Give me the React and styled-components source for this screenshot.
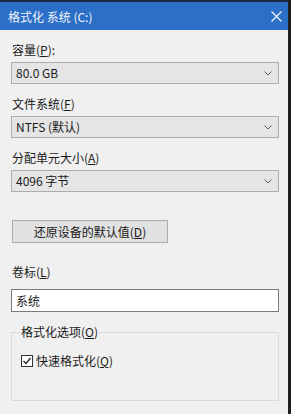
import React, { useState } from "react";
import styled, { createGlobalStyle } from "styled-components";

const GlobalStyle = createGlobalStyle`
  html, body {
    margin: 0;
    padding: 0;
    background: #1e1f22;
  }
  body {
    font-family: "Noto Sans CJK SC", "Noto Sans", sans-serif;
    font-size: 12px;
    color: #1a1a1a;
  }
`;

const Screen = styled.div`
  display: flex;
  width: 291px;
  height: 414px;
  overflow: hidden;
`;
const Window = styled.div`
  display: flex;
  flex-direction: column;
  width: 288px;
  background: #f0f0f0;
  border-top: 2px solid #1b2b45;
`;
const Edge = styled.div`
  flex: 1;
  background: #1e1f22;
`;
const TitleBar = styled.div`
  display: flex;
  align-items: center;
  justify-content: space-between;
  height: 28px;
  padding: 0 2px 0 8px;
  background: #2b6fc6;
  color: #f2f6fc;
  font-size: 12px;
`;
const CloseButton = styled.button`
  display: flex;
  align-items: center;
  justify-content: center;
  width: 20px;
  height: 20px;
  padding: 0;
  border: none;
  background: transparent;
  cursor: pointer;
`;
const Body = styled.div`
  display: flex;
  flex-direction: column;
  padding: 12px 9px 0 11px;
`;
const Label = styled.div`
  line-height: 16px;
  margin-top: ${({ $top }) => $top || 0}px;
  margin-bottom: ${({ $gap }) => $gap || 4}px;
  padding-left: 1px;
`;
const SelectBox = styled.div`
  display: flex;
  align-items: center;
  justify-content: space-between;
  box-sizing: border-box;
  height: 22px;
  padding: 0 6px 0 4px;
  border: 1px solid #adadad;
  background: #e5e5e5;
  line-height: 16px;
`;
const Button = styled.button`
  box-sizing: border-box;
  width: 156px;
  height: 23px;
  margin: 28px 0 0 1px;
  padding: 0;
  border: 1px solid #adadad;
  background: #e1e1e1;
  font-family: inherit;
  font-size: 12px;
  color: #1a1a1a;
`;
const TextInput = styled.input`
  box-sizing: border-box;
  width: 100%;
  height: 23px;
  margin: 0;
  padding: 0 4px;
  border: 1px solid #7a7a7a;
  background: #fff;
  font-family: inherit;
  font-size: 12px;
  color: #1a1a1a;
  outline: none;
`;
const Group = styled.fieldset`
  margin: 12px 0 0;
  padding: 13px 8px 31px;
  border: 1px solid #dadada;
  min-width: 0;
`;
const Legend = styled.legend`
  padding: 0 1px;
  line-height: 16px;
`;
const CheckRow = styled.label`
  display: flex;
  align-items: center;
  gap: 3px;
  line-height: 16px;
  padding-left: 1px;
`;

const Chevron = () => (
  <svg width="8" height="5" viewBox="0 0 8 5">
    <path d="M0.5 0.5 L4 4 L7.5 0.5" fill="none" stroke="#606060" strokeWidth="1" />
  </svg>
);

const Select = ({ value }) => (
  <SelectBox>
    <span>{value}</span>
    <Chevron />
  </SelectBox>
);

const CheckIcon = ({ checked }) => (
  <svg width="12" height="12" viewBox="0 0 12 12">
    <rect x="0.5" y="0.5" width="11" height="11" fill="#fff" stroke="#333" />
    {checked && (
      <path d="M2.5 6 L5 8.5 L9.5 3" fill="none" stroke="#222" strokeWidth="1.2" />
    )}
  </svg>
);

export default function App() {
  const [label, setLabel] = useState("系统");
  const [quick, setQuick] = useState(true);

  return (
    <>
      <GlobalStyle />
      <Screen>
        <Window>
          <TitleBar>
            <span>格式化 系统 (C:)</span>
            <CloseButton>
              <svg width="11" height="11" viewBox="0 0 11 11">
                <path d="M0.5 0.5 L10.5 10.5 M10.5 0.5 L0.5 10.5" stroke="#f2f6fc" strokeWidth="1.2" />
              </svg>
            </CloseButton>
          </TitleBar>
          <Body>
            <Label>
              容量(<u>P</u>):
            </Label>
            <Select value="80.0 GB" />
            <Label $top={12}>
              文件系统(<u>F</u>)
            </Label>
            <Select value="NTFS (默认)" />
            <Label $top={12}>
              分配单元大小(<u>A</u>)
            </Label>
            <Select value="4096 字节" />
            <Button>
              还原设备的默认值(<u>D</u>)
            </Button>
            <Label $top={21} $gap={9}>
              卷标(<u>L</u>)
            </Label>
            <TextInput value={label} onChange={(e) => setLabel(e.target.value)} />
            <Group>
              <Legend>
                格式化选项(<u>O</u>)
              </Legend>
              <CheckRow onClick={() => setQuick(!quick)}>
                <CheckIcon checked={quick} />
                <span>
                  快速格式化(<u>Q</u>)
                </span>
              </CheckRow>
            </Group>
          </Body>
        </Window>
        <Edge />
      </Screen>
    </>
  );
}
